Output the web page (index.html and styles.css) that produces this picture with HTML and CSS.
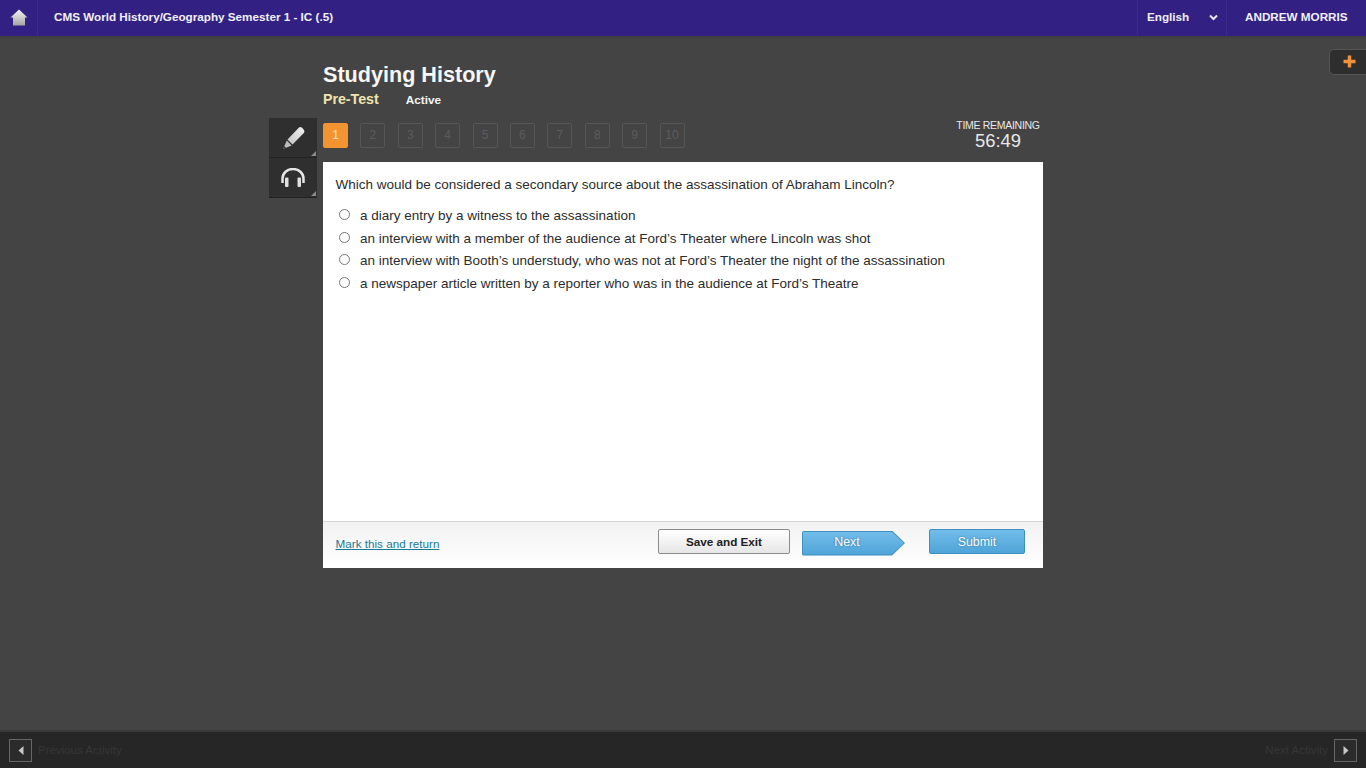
FILE: index.html
```html
<!DOCTYPE html>
<html lang="en">
<head>
<meta charset="utf-8">
<title>Studying History</title>
<link rel="stylesheet" href="styles.css">
</head>
<body>
<div class="app">
  <header class="topbar">
    <a class="home" aria-label="Home">
      <svg width="18" height="17" viewBox="0 0 18 17"><defs><linearGradient id="hg" x1="0" y1="0" x2="0" y2="1"><stop offset="0" stop-color="#f4f4f4"/><stop offset="1" stop-color="#a8a4a4"/></linearGradient></defs><path d="M9 0.500 L17.500 8.500 L15 8.500 L15 16.500 L3 16.500 L3 8.500 L0.500 8.500 Z" fill="url(#hg)"/></svg>
    </a>
    <div class="course">CMS World History/Geography Semester 1 - IC (.5)</div>
    <div class="lang">
      <span>English</span>
      <svg width="9" height="7" viewBox="0 0 9 7"><path d="M1 1.500 L4.500 5 L8 1.500" fill="none" stroke="#e8e6f2" stroke-width="2"/></svg>
    </div>
    <div class="user">ANDREW MORRIS</div>
  </header>

  <button class="addtab" aria-label="Add">
    <svg width="13" height="13" viewBox="0 0 13 13"><path d="M4.800 0.500 H8.200 V4.800 H12.500 V8.200 H8.200 V12.500 H4.800 V8.200 H0.500 V4.800 H4.800 Z" fill="#f0923a"/></svg>
  </button>

  <main class="stage">
    <aside class="tools">
      <div class="tool">
        <svg width="24" height="24" viewBox="0 0 24 24"><defs><linearGradient id="pg" x1="0" y1="1" x2="1" y2="0"><stop offset="0" stop-color="#c4c4c4"/><stop offset="1" stop-color="#f2f2f2"/></linearGradient></defs><path d="M6.500 13.500 L18 1.500 Q19.500 0.500 21 1.800 L23 4 Q24 5.500 22.800 7 L11.500 18.500 Z" fill="url(#pg)"/><path d="M5.800 14.500 L10.600 19.400 L2 23 Z" fill="#bdbdbd"/><path d="M2 23 L3.200 20 L5 21.800 Z" fill="#333"/></svg>
      </div>
      <div class="tool">
        <svg width="24" height="19" viewBox="0 0 24 19"><path d="M1.500 15 V10.500 A10.500 9.500 0 0 1 22.500 10.500 V15" fill="none" stroke="#e6e6e6" stroke-width="2.500"/><rect x="4" y="9.500" width="3.500" height="9.500" rx="1" fill="#e0e0e0"/><rect x="16.500" y="9.500" width="3.500" height="9.500" rx="1" fill="#e0e0e0"/></svg>
      </div>
    </aside>
    <div class="content">
      <h1 class="title">Studying History</h1>
      <div class="subtitle"><span class="kind">Pre-Test</span><span class="status">Active</span></div>
      <div class="navrow">
        <ol class="pager">
          <li class="current">1</li><li>2</li><li>3</li><li>4</li><li>5</li><li>6</li><li>7</li><li>8</li><li>9</li><li>10</li>
        </ol>
        <div class="timer"><div class="timer-label">TIME REMAINING</div><div class="timer-value">56:49</div></div>
      </div>
      <section class="card">
        <div class="card-body">
          <p class="question">Which would be considered a secondary source about the assassination of Abraham Lincoln?</p>
          <div class="answers">
            <label class="answer"><span class="radio"></span><span>a diary entry by a witness to the assassination</span></label>
            <label class="answer"><span class="radio"></span><span>an interview with a member of the audience at Ford’s Theater where Lincoln was shot</span></label>
            <label class="answer"><span class="radio"></span><span>an interview with Booth’s understudy, who was not at Ford’s Theater the night of the assassination</span></label>
            <label class="answer"><span class="radio"></span><span>a newspaper article written by a reporter who was in the audience at Ford’s Theatre</span></label>
          </div>
        </div>
        <div class="card-foot">
          <a class="mark">Mark this and return</a>
          <div class="actions">
            <button class="btn save">Save and Exit</button>
            <button class="btn next"><span>Next</span></button>
            <button class="btn submit">Submit</button>
          </div>
        </div>
      </section>
    </div>
  </main>

  <footer class="bottombar">
    <div class="activity">
      <span class="arrow"><svg width="6" height="9" viewBox="0 0 6 9"><path d="M5.500 0 V9 L0.500 4.500 Z" fill="#c8c8c8"/></svg></span>
      <span class="activity-label">Previous Activity</span>
    </div>
    <div class="activity">
      <span class="activity-label">Next Activity</span>
      <span class="arrow"><svg width="6" height="9" viewBox="0 0 6 9"><path d="M0.500 0 V9 L5.500 4.500 Z" fill="#c8c8c8"/></svg></span>
    </div>
  </footer>
</div>
</body>
</html>
```

FILE: styles.css
```css
* { box-sizing: border-box; }
html, body { margin: 0; height: 100%; }
body {
  background: #444444;
  font-family: "Liberation Sans", Arial, sans-serif;
  color: #2c2c2c;
  overflow: hidden;
}
.app {
  position: relative;
  height: 768px;
  display: flex;
  flex-direction: column;
}

/* top bar */
.topbar {
  flex: none;
  height: 38px;
  display: flex;
  align-items: stretch;
  background: #322182;
  border-bottom: 2px solid #3e3e3e;
  color: #f1eff8;
  font-size: 11.700px;
  font-weight: bold;
}
.home {
  width: 38px;
  padding-bottom: 2px;
  display: flex;
  align-items: center;
  justify-content: center;
  border-right: 1px solid #3b2c8a;
}
.course {
  flex: 1;
  padding-left: 16px;
  line-height: 34px;
}
.lang {
  width: 90px;
  display: flex;
  align-items: center;
  justify-content: space-between;
  padding: 0 8px 4px 9px;
  border-left: 1px solid #3b2c8a;
  border-right: 1px solid #3b2c8a;
}
.lang svg { position: relative; top: 1px; }
.user {
  width: 139px;
  padding-left: 18px;
  line-height: 34px;
}

/* floating tab */
.addtab {
  position: absolute;
  top: 49px;
  right: -4px;
  width: 41px;
  height: 26px;
  padding: 0 0 2px;
  display: flex;
  align-items: center;
  justify-content: center;
  background: #2e2e2e;
  border: 1px solid #555;
  border-radius: 5px;
}

/* main */
.stage {
  flex: 1;
  display: flex;
  align-items: flex-start;
  padding-left: 269px;
}
.tools {
  width: 54px;
  padding-top: 80px;
  flex: none;
}
.tool {
  position: relative;
  width: 48px;
  height: 40px;
  display: flex;
  align-items: center;
  justify-content: center;
  background: #2f2f2f;
  border-bottom: 1px solid #222;
}
.tool::after {
  content: "";
  position: absolute;
  right: 1px;
  bottom: 1px;
  border-style: solid;
  border-width: 0 0 5px 5px;
  border-color: transparent transparent #8a8a8a transparent;
}
.content {
  width: 720px;
  flex: none;
}
.title {
  margin: 0;
  padding-top: 24px;
  font-size: 21.600px;
  line-height: 26px;
  font-weight: bold;
  color: #f7f7f7;
}
.subtitle {
  display: flex;
  align-items: baseline;
  margin-top: 2px;
  height: 19px;
  line-height: 19px;
}
.kind {
  font-size: 14.200px;
  font-weight: bold;
  color: #f0e4ae;
}
.status {
  margin-left: 27px;
  font-size: 11.800px;
  font-weight: bold;
  color: #f5f5f5;
}
.navrow {
  display: flex;
  justify-content: space-between;
  height: 53px;
  padding-top: 11px;
}
.pager {
  list-style: none;
  margin: 0;
  padding: 3px 0 0;
  display: flex;
  gap: 12.400px;
}
.pager li {
  width: 25px;
  height: 25px;
  border: 1px solid #565656;
  border-radius: 2px;
  color: #5c5c5c;
  font-size: 12px;
  line-height: 23px;
  text-align: center;
}
.pager li.current {
  background: #f49431;
  border-color: #f49431;
  color: #fde7cd;
}
.timer {
  width: 90px;
  text-align: center;
  color: #e8e8e8;
}
.timer-label {
  font-size: 10.500px;
  letter-spacing: -0.300px;
  line-height: 11px;
  white-space: nowrap;
}
.timer-value {
  font-size: 18.400px;
  line-height: 20px;
}

/* card */
.card {
  height: 406px;
  display: flex;
  flex-direction: column;
  background: #fff;
}
.card-body {
  flex: 1;
  padding: 15px 12px 0 12.500px;
}
.question {
  margin: 0 0 16px;
  font-size: 13.500px;
  line-height: 15px;
}
.answers {
  display: flex;
  flex-direction: column;
  gap: 7.600px;
}
.answer {
  display: flex;
  align-items: center;
  gap: 10px;
  height: 15px;
  font-size: 13.500px;
  line-height: 15px;
  padding-left: 3.500px;
}
.radio {
  width: 11px;
  height: 11px;
  margin-top: -2px;
  border: 1px solid #767676;
  border-radius: 50%;
  background: #fff;
  flex: none;
}
.card-foot {
  flex: none;
  height: 47px;
  display: flex;
  justify-content: space-between;
  border-top: 1px solid #d6d6d6;
  background: linear-gradient(#f2f2f2, #ffffff);
  padding: 7px 18px 0 12.500px;
}
.mark {
  margin-top: 8px;
  font-size: 11.700px;
  line-height: 14px;
  color: #1a7a96;
  text-decoration: underline;
}
.actions {
  display: flex;
  align-items: flex-start;
}
.btn {
  height: 25px;
  font-family: inherit;
  font-size: 11.700px;
  border-radius: 2px;
  padding: 0;
}
.save {
  width: 132px;
  margin-right: 12px;
  font-weight: bold;
  color: #222;
  background: linear-gradient(#ffffff, #e6e6e6);
  border: 1px solid #8c8c8c;
}
.next {
  position: relative;
  width: 103px;
  height: 25px;
  margin: 1.500px 24px 0 0;
  font-size: 12.400px;
  color: #fff;
  background: #3f8fbf;
  border: 0;
  clip-path: polygon(0 0, calc(100% - 13px) 0, 100% 50%, calc(100% - 13px) 100%, 0 100%);
  text-shadow: 0 0 2px #2a6c93;
}
.next::before {
  content: "";
  position: absolute;
  inset: 1px;
  background: linear-gradient(#72bdea, #4fa4d8);
  clip-path: polygon(0 0, calc(100% - 12.500px) 0, 100% 50%, calc(100% - 12.500px) 100%, 0 100%);
}
.next span { position: relative; top: -1px; left: -6.500px; }
.submit {
  width: 96px;
  font-size: 12.400px;
  color: #fff;
  background: linear-gradient(#72bdea, #4fa4d8);
  border: 1px solid #3f8fbf;
  text-shadow: 0 0 2px #2a6c93;
}

/* bottom bar */
.bottombar {
  flex: none;
  height: 38px;
  display: flex;
  justify-content: space-between;
  align-items: center;
  padding: 0 9px;
  background: #262626;
  border-top: 2px solid #3a3a3a;
}
.activity {
  display: flex;
  align-items: center;
  gap: 6px;
}
.arrow {
  width: 23px;
  height: 23px;
  display: flex;
  align-items: center;
  justify-content: center;
  border: 1px solid #666;
  background: #2b2b2b;
}
.activity-label {
  font-size: 11.500px;
  color: #363636;
}
```
